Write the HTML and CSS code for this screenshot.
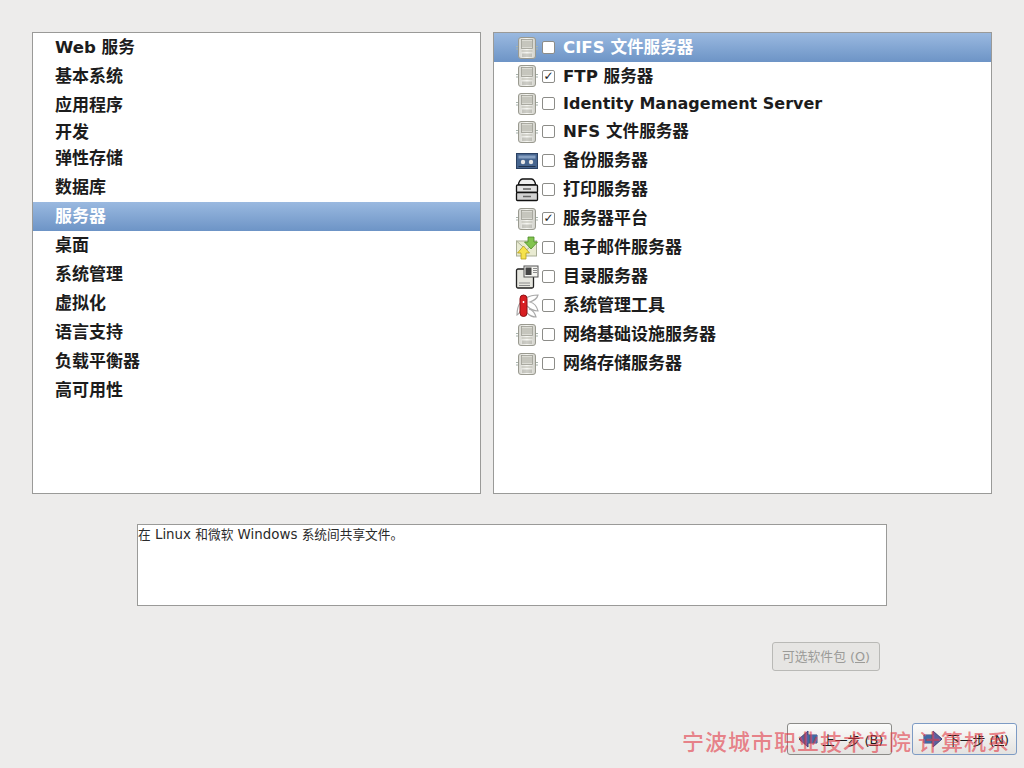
FILE: index.html
```html
<!DOCTYPE html>
<html>
<head>
<meta charset="utf-8">
<meta name="viewport" content="width=device-width, initial-scale=1.0">
<title>软件包选择</title>
<link rel="stylesheet" href="styles.css">
</head>
<body>
<svg class="defs" width="0" height="0">
  <defs>
    <linearGradient id="tower" x1="0" y1="0" x2="1" y2="0">
      <stop offset="0" stop-color="#d6d6d0"/>
      <stop offset="0.5" stop-color="#f7f7f3"/>
      <stop offset="1" stop-color="#cfcfc8"/>
    </linearGradient>
    <symbol id="server" viewBox="0 0 24 24">
      <path d="M1 10.500h3M1 13h3M20 10.500h3M20 13h3" stroke="#a8b4ad" stroke-width="1.200"/>
      <rect x="3.500" y="1.500" width="17" height="21" rx="2.500" fill="url(#tower)" stroke="#9a9a90"/>
      <rect x="6.500" y="3.500" width="11" height="9" fill="#dcdcd5" stroke="#9c9c92" stroke-width=".8"/>
      <path d="M7 6h10M7 8h10M7 10h10" stroke="#a3a399" stroke-width=".8"/>
      <path d="M6.500 15h11" stroke="#b5b5aa"/>
      <path d="M8 21v-3.500M10 21v-3.500M12 21v-3.500M14 21v-3.500M16 21v-3.500" stroke="#8f8f85" stroke-width=".8"/>
    </symbol>
    <symbol id="tape" viewBox="0 0 24 24">
      <rect x="1.500" y="4.500" width="21" height="15" fill="#46658f" stroke="#2b4163"/>
      <rect x="3.500" y="6.500" width="17" height="3" fill="#86a0c2"/>
      <circle cx="8" cy="13" r="2.200" fill="#e8e8e8"/>
      <circle cx="16" cy="13" r="2.200" fill="#e8e8e8"/>
      <path d="M3.500 17.500h17" stroke="#22344f"/>
    </symbol>
    <symbol id="printer" viewBox="0 0 24 24">
      <path d="M3.500 7c0-3 2-6 4-6h9c2 0 4 3 4 6z" fill="#f0f0f0" stroke="#111" stroke-width="1.300"/>
      <rect x="1.500" y="7" width="21" height="7.500" rx="1" fill="#e2e2e2" stroke="#111" stroke-width="1.300"/>
      <rect x="1.500" y="14.500" width="21" height="8" rx="1" fill="#d2d2d2" stroke="#111" stroke-width="1.300"/>
      <path d="M8 11h8M8 18.500h8" stroke="#666" stroke-width="1.400"/>
    </symbol>
    <symbol id="mail" viewBox="0 0 24 24">
      <rect x="1.500" y="5" width="20" height="15" fill="#e9ebd2" stroke="#a9ae95"/>
      <path d="M1.500 5l10 9 10-9" fill="none" stroke="#a9ae95"/>
      <path d="M13 1h6v5h3.500l-6.500 7-6.500-7h3.500z" fill="#82c44e" stroke="#4d8a2a" stroke-width=".8"/>
      <path d="M6 23v-6h-3.500l6-7 6 7h-3.500v6z" fill="#f6e24c" stroke="#b5a020" stroke-width=".8"/>
    </symbol>
    <symbol id="directory" viewBox="0 0 24 24">
      <rect x="1.500" y="4" width="17" height="19" rx="1.500" fill="#e6e6df" stroke="#222" stroke-width="1.300"/>
      <path d="M4 18h11M4 20.500h11" stroke="#8c8c8c"/>
      <rect x="9" y="1" width="14" height="11" fill="#f4f4f0" stroke="#555"/>
      <rect x="10.500" y="2.500" width="6" height="7.500" fill="#444"/>
      <path d="M18 3.500h4M18 5.500h4M18 7.500h4" stroke="#8c8c8c"/>
    </symbol>
    <symbol id="knife" viewBox="0 0 24 24">
      <g fill="none" stroke="#a9a9a9" stroke-width="1.200">
        <path d="M11 4c5-3 9-3 12-3-1 4-5 6-8 7 4 1 7 5 8 9-4 0-8-2-11-5"/>
        <path d="M14 15c3 1 6 4 7 8-3 0-7-2-9-4"/>
        <path d="M5 9c-2 3-3 7-3 12 2-1 3-3 4-5"/>
      </g>
      <rect x="5" y="1" width="7" height="21.500" rx="3.500" fill="#d81e22" stroke="#8e1114"/>
      <path d="M7.500 8h2M8.500 7v2" stroke="#fff"/>
    </symbol>
    <symbol id="arrow" viewBox="0 0 20 18">
      <path d="M1 9l9-8v4h9v8h-9v4z" fill="#5b5f9c" stroke="#3d4277"/>
      <path d="M10 5h9v8h-9z" fill="#3f6aa5"/>
    </symbol>
  </defs>
</svg>

<div class="panels">
  <ul class="list groups">
    <li class="row mixed">Web 服务</li>
    <li class="row">基本系统</li>
    <li class="row">应用程序</li>
    <li class="row h25">开发</li>
    <li class="row h27">弹性存储</li>
    <li class="row h30">数据库</li>
    <li class="row selected">服务器</li>
    <li class="row">桌面</li>
    <li class="row">系统管理</li>
    <li class="row">虚拟化</li>
    <li class="row">语言支持</li>
    <li class="row">负载平衡器</li>
    <li class="row">高可用性</li>
  </ul>
  <ul class="list options">
    <li class="row mixed selected"><svg class="icon"><use href="#server"/></svg><span class="check"></span>CIFS 文件服务器</li>
    <li class="row mixed h28 low"><svg class="icon"><use href="#server"/></svg><span class="check on">✓</span>FTP 服务器</li>
    <li class="row latin h27"><svg class="icon"><use href="#server"/></svg><span class="check"></span>Identity Management Server</li>
    <li class="row mixed"><svg class="icon"><use href="#server"/></svg><span class="check"></span>NFS 文件服务器</li>
    <li class="row"><svg class="icon"><use href="#tape"/></svg><span class="check"></span>备份服务器</li>
    <li class="row"><svg class="icon"><use href="#printer"/></svg><span class="check"></span>打印服务器</li>
    <li class="row"><svg class="icon"><use href="#server"/></svg><span class="check on">✓</span>服务器平台</li>
    <li class="row"><svg class="icon"><use href="#mail"/></svg><span class="check"></span>电子邮件服务器</li>
    <li class="row"><svg class="icon"><use href="#directory"/></svg><span class="check"></span>目录服务器</li>
    <li class="row"><svg class="icon"><use href="#knife"/></svg><span class="check"></span>系统管理工具</li>
    <li class="row"><svg class="icon"><use href="#server"/></svg><span class="check"></span>网络基础设施服务器</li>
    <li class="row"><svg class="icon"><use href="#server"/></svg><span class="check"></span>网络存储服务器</li>
  </ul>
</div>

<div class="desc"><span class="zh">在</span> Linux <span class="zh">和微软</span> Windows <span class="zh">系统间共享文件。</span></div>

<div class="extras">
  <button class="btn disabled">可选软件包 (<u>O</u>)</button>
</div>

<div class="nav">
  <button class="btn nav-btn"><svg class="arrow"><use href="#arrow"/></svg>上一步 (<u>B</u>)</button>
  <button class="btn nav-btn focused"><svg class="arrow flip"><use href="#arrow"/></svg>下一步 (<u>N</u>)</button>
</div>

<div class="watermark">宁波城市职业技术学院 计算机系</div>
</body>
</html>
```

FILE: styles.css
```css
html, body {
  margin: 0;
  padding: 0;
}

body {
  width: 1024px;
  height: 768px;
  box-sizing: border-box;
  padding-top: 32px;
  background: #edeceb;
  font-family: "DejaVu Sans", "Noto Sans CJK SC", sans-serif;
  color: #1c1c1c;
  overflow: hidden;
  position: relative;
}

.defs {
  position: absolute;
}

.panels {
  display: flex;
  gap: 12px;
  margin-left: 32px;
}

.list {
  list-style: none;
  margin: 0;
  height: 462px;
  box-sizing: border-box;
  padding: 0;
  background: #fff;
  border: 1px solid #9a9a98;
  font-size: 17px;
  font-weight: bold;
}

.groups {
  width: 449px;
}

.options {
  width: 499px;
}

.row {
  display: flex;
  align-items: center;
  box-sizing: border-box;
  height: 29px;
  padding-bottom: 4px;
  white-space: nowrap;
}

.mixed {
  font-size: 16.6px;
}

.latin {
  font-size: 16px;
}

.row.h25 {
  height: 25px;
}

.row.h27 {
  height: 27px;
}

.row.h28 {
  height: 28px;
}

.row.h30 {
  height: 30px;
}

.groups .row {
  padding-left: 22px;
}

.options .row {
  padding-left: 21px;
}

.selected {
  color: #fff;
  background: linear-gradient(#9ab9e0, #6d94c6);
}

.icon {
  width: 24px;
  height: 24px;
  margin-top: 4px;
  flex: none;
}

.check {
  flex: none;
  width: 11px;
  height: 11px;
  margin: 4px 8px 0 3px;
  background: #fff;
  border: 1px solid #8c8c88;
  border-radius: 2px;
  font-size: 12px;
  line-height: 11px;
  text-align: center;
  color: #222;
}

/* these two rows sit lower against their checkbox */
.options .low {
  padding-bottom: 2px;
}

.low .icon, .low .check {
  margin-top: 2px;
}

.options .latin {
  padding-bottom: 0;
}

.latin .icon, .latin .check {
  margin-top: 0;
}

.desc {
  width: 750px;
  height: 82px;
  box-sizing: border-box;
  margin: 30px 0 0 137px;
  padding: 1px 0;
  background: #fff;
  border: 1px solid #9a9a98;
  font-size: 13.4px;
  line-height: 17px;
  color: #2a2a2a;
}

.zh {
  font-size: 12.7px;
}

.extras {
  display: flex;
  justify-content: flex-end;
  margin: 36px 144px 0 0;
}

.btn {
  font-family: inherit;
  font-size: 12.8px;
  border: 1px solid #a5a5a2;
  border-radius: 3px;
  background: linear-gradient(#fbfbfa, #e3e2e0);
  padding: 0;
  color: #1c1c1c;
}

.disabled {
  width: 108px;
  height: 29px;
  padding-bottom: 2px;
  color: #9b9b98;
  background: #e6e5e3;
  border-color: #b9b9b6;
}

.nav {
  display: flex;
  justify-content: flex-end;
  gap: 20px;
  margin: 52px 7px 0 0;
}

.nav-btn {
  display: flex;
  align-items: center;
  width: 105px;
  height: 32px;
  padding-left: 10px;
  border-color: #8b8b88;
}

.focused {
  border-color: #7d9bc4;
}

.arrow {
  width: 20px;
  height: 18px;
  margin-right: 4px;
  flex: none;
}

.flip {
  transform: scaleX(-1);
}

/* stamped over the buttons in the picture */
.watermark {
  position: absolute;
  left: 682px;
  top: 726px;
  font-size: 22px;
  font-weight: 500;
  line-height: 28px;
  letter-spacing: 1px;
  white-space: nowrap;
  color: rgba(226, 58, 70, 0.62);
  font-family: "Noto Sans CJK SC", sans-serif;
}
```
